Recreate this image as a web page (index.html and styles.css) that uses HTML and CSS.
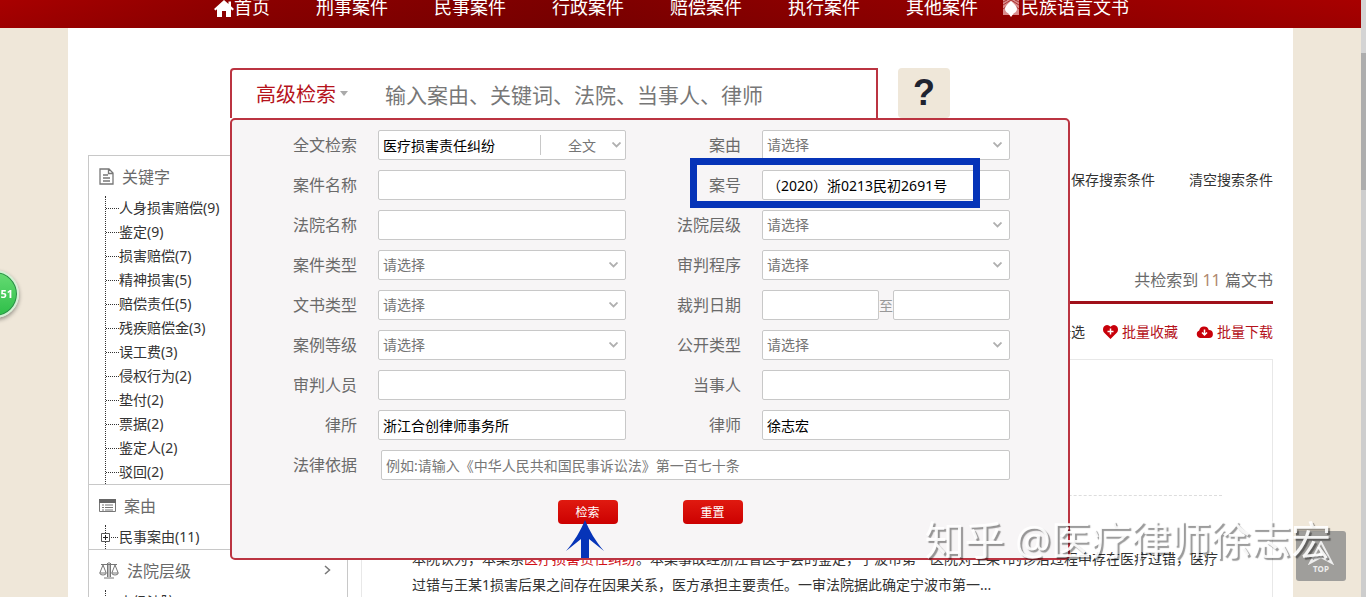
FILE: index.html
```
<!DOCTYPE html>
<html lang="zh-CN">

<head>
    <meta charset="UTF-8" />
    <meta name="viewport" content="width=device-width, initial-scale=1.0" />
    <title>高级检索</title>
    <link rel="stylesheet" href="styles.css">
</head>

<body>
    <header class="topbar">
        <nav class="nav">
            <a href="#"><svg width="20" height="18" viewBox="0 0 20 18"><path d="M10 0 0 9l1.500 1.500L3 9.300V17h5v-6h4v6h5V9.300l1.500 1.200L20 9l-3-2.700V1.500h-2.500v2.500z" fill="#fff" /></svg>首页</a>
            <a href="#">刑事案件</a>
            <a href="#">民事案件</a>
            <a href="#">行政案件</a>
            <a href="#">赔偿案件</a>
            <a href="#">执行案件</a>
            <a href="#">其他案件</a>
            <a href="#" class="minority"><svg width="20" height="18" viewBox="0 0 20 18"><path d="M2 0h16v15H2z" fill="#d98c8c" /><path d="M2 5l8-5 8 5M2 9l8-6 8 6M2 2l4-2M18 2l-4-2" fill="none" stroke="#a33" /><path d="M10 1c3 3 6 5 6 8 0 2-2 4-3 4l-3 4-3-4c-1 0-3-2-3-4 0-3 3-5 6-8z" fill="#fff" /></svg>民族语言文书</a>
        </nav>
    </header>

    <div class="page">
        <div class="search">
            <div class="search-bar">
                <button type="button" class="advance">高级检索</button>
                <input type="text" aria-label="检索" placeholder="输入案由、关键词、法院、当事人、律师">
            </div>
            <button type="button" class="help">?</button>

            <form class="panel">
                <div class="fields">
                    <label for="fullText">全文检索</label>
                    <div class="combo">
                        <input type="text" id="fullText" value="医疗损害责任纠纷">
                        <select aria-label="检索范围"><option>全文</option></select>
                    </div>
                    <label for="cause">案由</label>
                    <select id="cause"><option>请选择</option></select>

                    <label for="caseName">案件名称</label>
                    <input type="text" id="caseName">
                    <label for="caseNo">案号</label>
                    <input type="text" id="caseNo" value="（2020）浙0213民初2691号">

                    <label for="courtName">法院名称</label>
                    <input type="text" id="courtName">
                    <label for="courtLevel">法院层级</label>
                    <select id="courtLevel"><option>请选择</option></select>

                    <label for="caseType">案件类型</label>
                    <select id="caseType"><option>请选择</option></select>
                    <label for="procedure">审判程序</label>
                    <select id="procedure"><option>请选择</option></select>

                    <label for="docType">文书类型</label>
                    <select id="docType"><option>请选择</option></select>
                    <label for="dateFrom">裁判日期</label>
                    <div class="range">
                        <input type="text" id="dateFrom">
                        <span>至</span>
                        <input type="text" id="dateTo" aria-label="裁判日期止">
                    </div>

                    <label for="caseLevel">案例等级</label>
                    <select id="caseLevel"><option>请选择</option></select>
                    <label for="openType">公开类型</label>
                    <select id="openType"><option>请选择</option></select>

                    <label for="judge">审判人员</label>
                    <input type="text" id="judge">
                    <label for="party">当事人</label>
                    <input type="text" id="party">

                    <label for="firm">律所</label>
                    <input type="text" id="firm" value="浙江合创律师事务所">
                    <label for="lawyer">律师</label>
                    <input type="text" id="lawyer" value="徐志宏">

                    <label for="law">法律依据</label>
                    <input type="text" id="law" class="wide" placeholder="例如:请输入《中华人民共和国民事诉讼法》第一百七十条">
                </div>
                <div class="buttons">
                    <button type="button">检索</button>
                    <button type="reset">重置</button>
                </div>
                <div class="mark-box"></div>
                <svg class="mark-arrow" width="38" height="38" viewBox="0 0 38 38"><path d="M19 0C23 10 30 22 38 31L23 19v19h-8V19L0 31C8 22 15 10 19 0z" fill="#0634b8" /></svg>
            </form>
        </div>

        <div class="content">
            <aside class="sidebar">
                <section>
                    <h3><svg width="15" height="17" viewBox="0 0 15 17" fill="none" stroke="#777" stroke-width="1.300"><path d="M1 1h9l4 4v11H1zM9.500 1v4.500H14M4 7h5M4 10h7M4 13h7" /></svg>关键字</h3>
                    <ul class="tree">
                        <li><a href="#">人身损害赔偿(9)</a></li>
                        <li><a href="#">鉴定(9)</a></li>
                        <li><a href="#">损害赔偿(7)</a></li>
                        <li><a href="#">精神损害(5)</a></li>
                        <li><a href="#">赔偿责任(5)</a></li>
                        <li><a href="#">残疾赔偿金(3)</a></li>
                        <li><a href="#">误工费(3)</a></li>
                        <li><a href="#">侵权行为(2)</a></li>
                        <li><a href="#">垫付(2)</a></li>
                        <li><a href="#">票据(2)</a></li>
                        <li><a href="#">鉴定人(2)</a></li>
                        <li><a href="#">驳回(2)</a></li>
                    </ul>
                </section>
                <section>
                    <h3><svg width="17" height="13" viewBox="0 0 17 13"><path d="M.5 1.500h16v11H.5z" fill="#fff" stroke="#777" /><path d="M0 0h17v4H0z" fill="#666" /><path d="M3 6h2M3 8.500h2M3 11h2M6 6h8M6 8.500h8M6 11h8" stroke="#777" /></svg>案由</h3>
                    <ul class="tree closed">
                        <li><svg width="18" height="9" viewBox="0 0 18 9"><path d="M.5.5h8v8h-8z" fill="#fff" stroke="#555" /><path d="M2 4.500h5M4.500 2v5" stroke="#222" /><path d="M10 4.500h8" stroke="#333" stroke-dasharray="1 1" /></svg><a href="#">民事案由(11)</a></li>
                    </ul>
                </section>
                <section>
                    <h3><svg width="20" height="17" viewBox="0 0 20 17" fill="none" stroke="#777"><path d="M10 0v15M8.500 1v14M11.500 1v14M2 2.500h16M5 16h10M4 3 .8 11h6.400zM16 3l-3.200 8h6.400zM.8 11q0 2 3.200 2t3.200-2M12.800 11q0 2 3.200 2t3.200-2" /></svg>法院层级<svg class="more" width="7" height="10" viewBox="0 0 7 10"><path d="M1 1l4.500 4L1 9" fill="none" stroke="#777" stroke-width="1.500" /></svg></h3>
                    <ul class="tree">
                        <li><a href="#">中级法院(8)</a></li>
                    </ul>
                </section>
            </aside>

            <main class="results">
                <div class="actions">
                    <a href="#">保存搜索条件</a>
                    <a href="#">清空搜索条件</a>
                </div>
                <p class="count">共检索到 <span>11</span> 篇文书</p>
                <div class="batch">
                    <label><input type="checkbox">全选</label>
                    <a href="#"><svg width="15" height="14" viewBox="0 0 15 14"><path d="M7.500 14 1 7.500C-1 5 0 0 4 0q2 0 3.500 1.800Q9 0 11 0c4 0 5 5 3 7.500z" fill="#c8000a" /><path d="M4.500 6.500h6M7.500 3.500v6" stroke="#fff" stroke-width="1.500" /></svg>批量收藏</a>
                    <a href="#"><svg width="17" height="12" viewBox="0 0 17 12"><path d="M4 12a4 4 0 0 1-.8-7.600A5 5 0 0 1 12.800 4 4 4 0 0 1 13 12z" fill="#c8000a" /><path d="M8.500 3.500v5M6 6.500 8.500 9 11 6.500" fill="none" stroke="#fff" stroke-width="1.500" /></svg>批量下载</a>
                </div>
                <article class="card">
                    <hr>
                    <p>本院认为，本案系<em>医疗损害责任纠纷</em>。本案事故经浙江省医学会的鉴定，宁波市第一医院对王某1的诊治过程中存在医疗过错，医疗过错与王某1损害后果之间存在因果关系，医方承担主要责任。一审法院据此确定宁波市第一...</p>
                </article>
            </main>
        </div>
    </div>

    <div class="badge">51</div>
    <a href="#" class="to-top"><svg width="26" height="24" viewBox="0 0 26 24"><path d="M13 1 24 22 13 16 2 22zM13 9v7M6 18l7-6 7 6" fill="none" stroke="#eee" stroke-width="2" /></svg>TOP</a>
    <div class="watermark">知乎 @医疗律师徐志宏</div>
    <div class="scroll"></div>
</body>

</html>
```
FILE: styles.css
```
:root {
    --red: #bb3441;
    --beige: #efe7d9;
    --gray: #6a6a6a;
    --line: #c8c8c8;
    --blue: #0634b8;
}

* {
    margin: 0;
    padding: 0;
    box-sizing: border-box;
}

body {
    height: 100vh;
    overflow: hidden;
    padding-right: 5px;
    font-family: "Noto Sans", "Noto Sans CJK SC", sans-serif;
    font-size: 14px;
    color: #333;
    background: var(--beige);
}

a {
    color: inherit;
    text-decoration: none;
}

input,
select,
button {
    font: inherit;
}

.topbar {
    height: 28px;
    background: linear-gradient(rgba(60, 0, 0, 0), rgba(60, 0, 0, 0.1)), linear-gradient(90deg, #a80000, #8a0000 20%, #7c0000 42%, #8c0000 60%, #980000 80%, #a80000);
}

.nav {
    display: flex;
    width: 90%;
    margin: 0 auto;
    padding-left: 146px;
    gap: 46px;
    font-size: 18px;
    line-height: 14px;
    color: #fff;
    white-space: nowrap;
}

.nav a {
    display: flex;
}

.nav .minority {
    margin-left: -23px;
}

.page {
    width: 90%;
    min-height: 100vh;
    margin: 0 auto;
    padding-top: 40px;
    background: #fff;
}

.search {
    position: relative;
    display: flex;
    gap: 20px;
    width: 840px;
    margin-left: 162px;
}

.search-bar {
    display: flex;
    width: 648px;
    height: 50px;
    border: 2px solid var(--red);
    border-bottom: none;
    border-radius: 4px 0 0 0;
}

.advance {
    display: flex;
    align-items: center;
    gap: 4px;
    padding: 0 0 2px 24px;
    border: none;
    background: none;
    font-size: 20px;
    color: #b5121b;
    white-space: nowrap;
}

.advance::after {
    content: "";
    border: 4px solid transparent;
    border-top: 5px solid #aaa;
    border-bottom: none;
}

.search-bar input {
    flex: 1;
    min-width: 0;
    padding: 2px 0 0 37px;
    border: none;
    background: none;
    font-size: 21px;
}

::placeholder {
    color: #777;
}

.help {
    width: 52px;
    height: 50px;
    border: none;
    border-radius: 4px;
    background: var(--beige);
    font-family: "Liberation Sans", sans-serif;
    font-size: 36px;
    font-weight: bold;
    color: #1f2430;
}

/* advanced search drop-down */
.panel {
    position: absolute;
    top: 100%;
    left: 0;
    right: 0;
    z-index: 2;
    padding: 10px 58px 34px 0;
    border: 2px solid var(--red);
    border-radius: 5px;
    background: #f7f5f6;
}

.fields {
    display: grid;
    grid-template-columns: 146px 1fr 136px 1fr;
    gap: 10px 0;
}

.fields > label {
    padding-right: 21px;
    font-size: 16px;
    line-height: 30px;
    color: var(--gray);
    text-align: right;
}

.fields input,
.fields select,
.combo {
    width: 100%;
    min-width: 0;
    height: 30px;
    padding: 0 4px;
    border: 1px solid var(--line);
    border-radius: 2px;
    background: #fff;
}

.fields select {
    appearance: none;
    padding-bottom: 2px;
    background: #fff url("data:image/svg+xml,%3Csvg xmlns='http://www.w3.org/2000/svg' width='9' height='6'%3E%3Cpath d='M.5.5l4 4 4-4' fill='none' stroke='%23b0b0b0' stroke-width='1.800'/%3E%3C/svg%3E") no-repeat right 7px center;
    color: #757575;
}

.combo {
    display: flex;
    align-items: center;
}

.fields .combo input {
    flex: 1;
    height: 20px;
    padding: 0;
    border: none;
}

.fields .combo select {
    width: 85px;
    height: 20px;
    margin-right: -4px;
    padding: 0 0 0 27px;
    border: none;
    border-left: 1px solid var(--line);
    border-radius: 0;
    background-position: right 4px center;
}

.range {
    display: flex;
    align-items: center;
    color: #999;
}

.range input {
    flex: 1;
}

.fields .wide {
    grid-column: 2 / 5;
    width: auto;
    margin-left: 3px;
}

.buttons {
    display: flex;
    justify-content: center;
    gap: 65px;
    margin: 20px -58px 0 0;
}

.buttons button {
    width: 60px;
    height: 24px;
    border: none;
    border-radius: 4px;
    background: linear-gradient(#e01a10, #cc0000);
    font-size: 12px;
    color: #fff;
}

.mark-box {
    position: absolute;
    top: 38px;
    left: 458px;
    width: 290px;
    height: 50px;
    border: 7px solid var(--blue);
    pointer-events: none;
}

.mark-arrow {
    position: absolute;
    bottom: 0;
    left: 334px;
}

.content {
    display: flex;
    gap: 13px;
    padding: 37px 20px 0;
}

.sidebar {
    flex: none;
    width: 260px;
    border: 1px solid var(--line);
    border-top: none;
}

.sidebar section {
    border-top: 1px solid var(--line);
}

.sidebar h3 {
    display: flex;
    align-items: center;
    gap: 8px;
    height: 40px;
    padding: 0 16px 0 10px;
    font-size: 16px;
    font-weight: normal;
    color: var(--gray);
}

.sidebar .more {
    margin-left: auto;
}

.tree {
    margin-left: 16px;
    border-left: 1px dotted #333;
    list-style: none;
}

.tree li {
    display: flex;
    align-items: center;
    height: 24px;
}

.tree li::before {
    content: "";
    width: 13px;
    border-top: 1px dotted #333;
}

.tree a {
    padding-bottom: 2px;
}

.closed li::before {
    display: none;
}

.closed svg {
    margin-left: -5px;
}

.results {
    flex: 1;
}

.actions {
    display: flex;
    justify-content: flex-end;
    gap: 34px;
    line-height: 50px;
}

.count {
    margin-top: 54px;
    border-bottom: 3px solid #a0101a;
    font-size: 16px;
    line-height: 42px;
    color: var(--gray);
    text-align: right;
}

.count span {
    color: #b08870;
}

.batch {
    display: flex;
    justify-content: flex-end;
    gap: 18px;
    line-height: 55px;
    color: #b5121b;
}

.batch a,
.batch label {
    display: flex;
    align-items: center;
    gap: 4px;
}

.batch label {
    color: #333;
}

.card {
    padding: 135px 50px 0;
    border: 1px solid #e8e8e8;
}

.card hr {
    border: none;
    border-top: 1px dashed #ddd;
}

.card p {
    margin-top: 50px;
    padding-bottom: 40px;
    line-height: 26px;
}

.card em {
    font-style: normal;
    color: #d01018;
}

.badge {
    position: fixed;
    top: 270px;
    left: -29px;
    width: 48px;
    height: 48px;
    padding-right: 4px;
    border: 2px solid #d5eed5;
    border-radius: 50%;
    box-shadow: 0 2px 4px rgba(0, 0, 0, 0.4), inset 0 0 0 1px #2b8a48;
    background: linear-gradient(#66dc74, #2dbd48);
    font-size: 11px;
    font-weight: bold;
    line-height: 43px;
    color: #fff;
    text-align: right;
}

.to-top {
    position: fixed;
    right: 20px;
    bottom: 16px;
    display: flex;
    flex-direction: column;
    align-items: center;
    width: 50px;
    height: 50px;
    padding-top: 10px;
    border-radius: 3px;
    background: #9f9e9b;
    font-size: 8px;
    font-weight: bold;
    line-height: 1;
    color: #eee;
}

.watermark {
    position: fixed;
    right: 35px;
    bottom: 30px;
    z-index: 3;
    font-size: 40px;
    line-height: 54px;
    color: rgba(255, 255, 255, 0.9);
    text-shadow: 2px 2px 1px rgba(0, 0, 0, 0.4);
}

.scroll {
    position: fixed;
    top: 0;
    right: 0;
    bottom: 0;
    width: 5px;
    background: linear-gradient(#d4d4d4 53px, #adadad 53px, #adadad 190px, #cdcdcd 190px);
}
```
